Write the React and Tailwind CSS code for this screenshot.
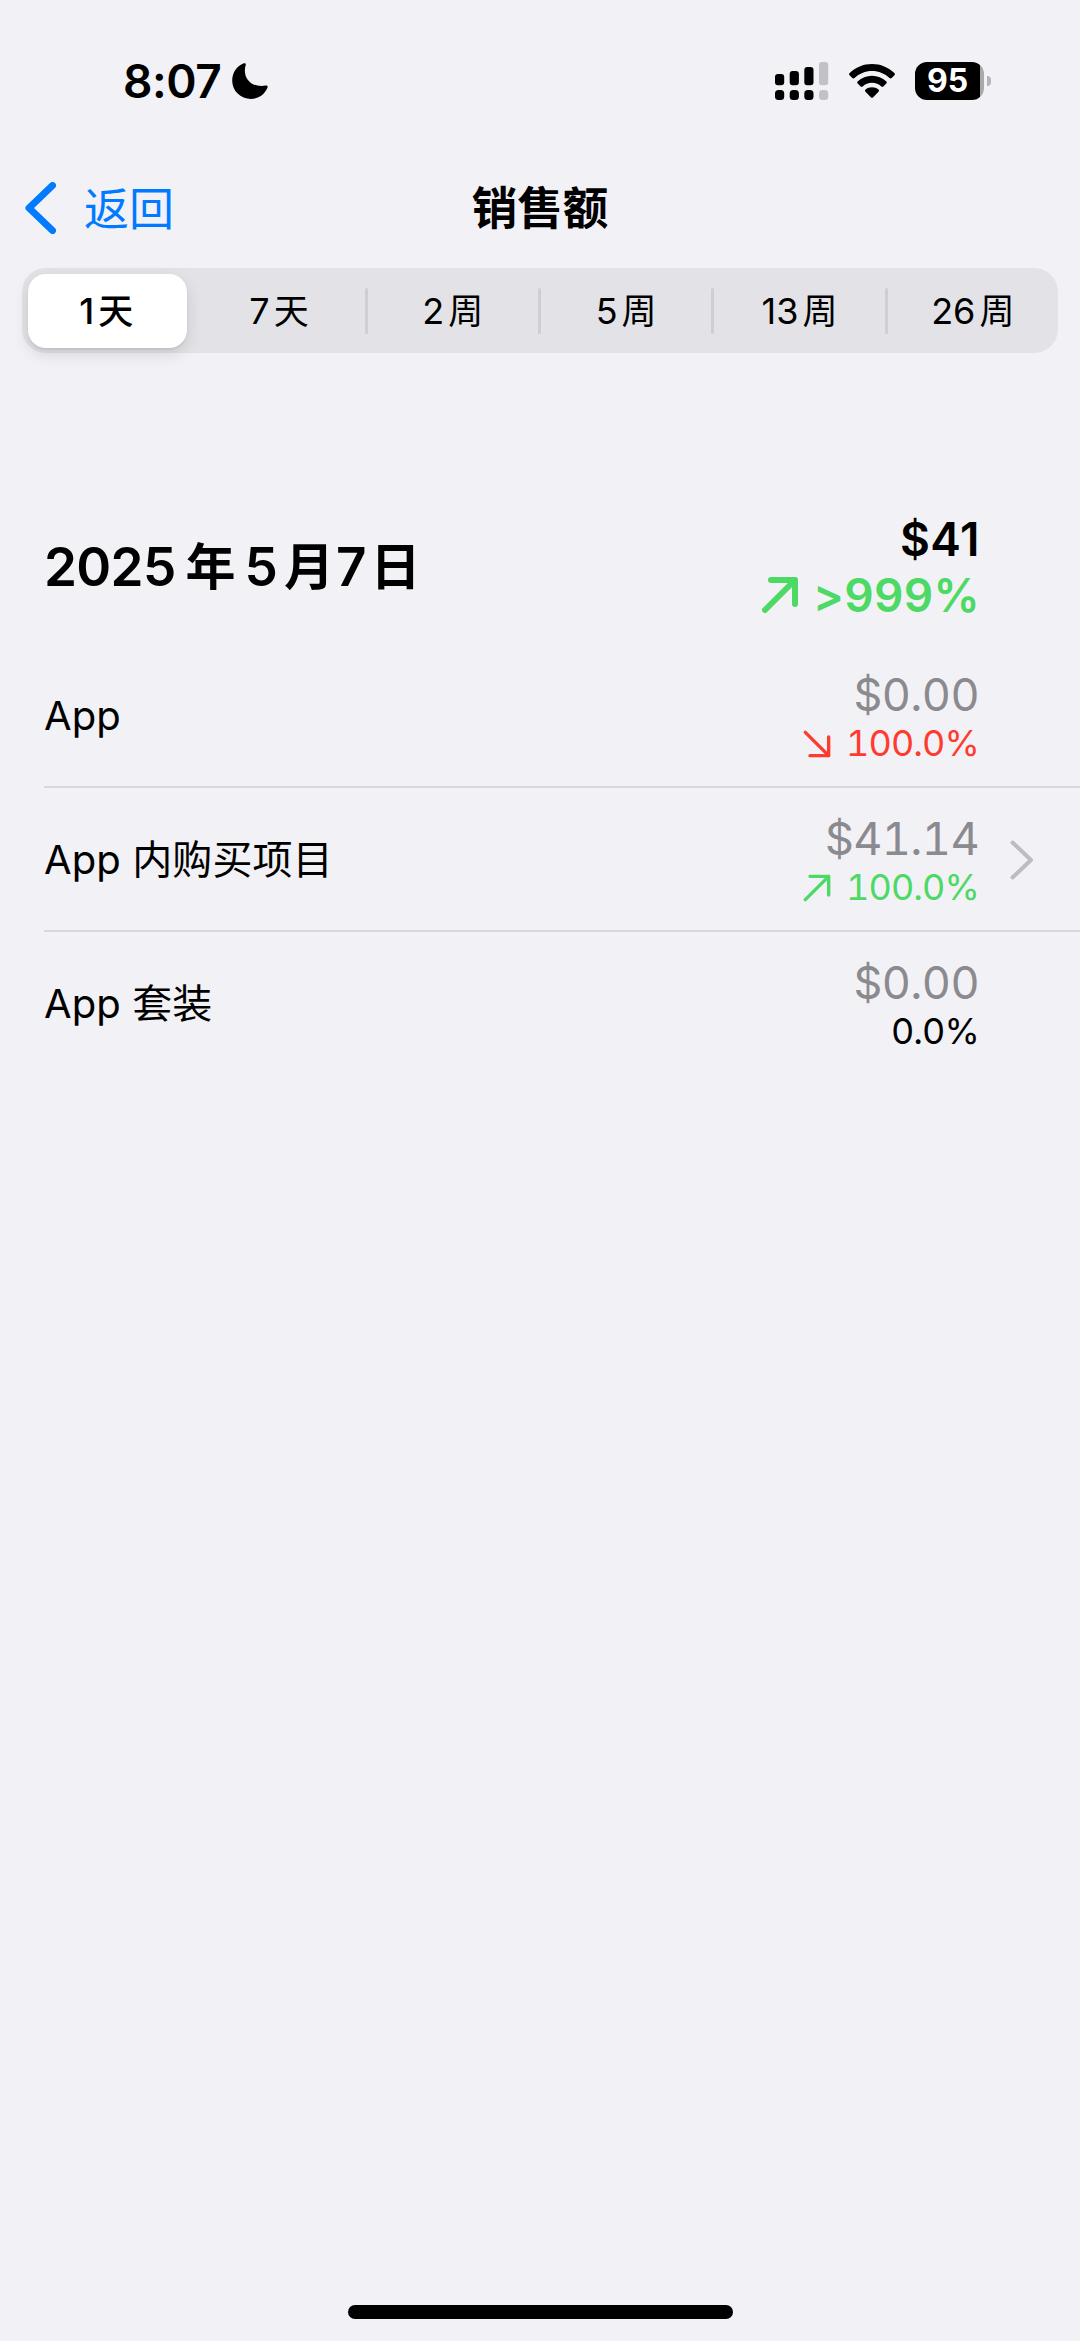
import React from 'react';

const ranges = [
  { id: '1d', count: '1', unit: '天' },
  { id: '7d', count: '7', unit: '天' },
  { id: '2w', count: '2', unit: '周' },
  { id: '5w', count: '5', unit: '周' },
  { id: '13w', count: '13', unit: '周' },
  { id: '26w', count: '26', unit: '周' },
];

const rows = [
  { id: 'app', name: 'App', amount: '$0.00', change: '100.0%', trend: 'down' },
  { id: 'iap', name: 'App 内购买项目', amount: '$41.14', change: '100.0%', trend: 'up', link: true },
  { id: 'bundle', name: 'App 套装', amount: '$0.00', change: '0.0%', trend: 'none' },
];

const trendColors = {
  up: 'text-[#4cd964]',
  down: 'text-[#ff3b30]',
  none: 'text-black',
};

function StatusBar() {
  return (
    <div className="flex h-[161px] items-center pl-[123px] pr-[89px]">
      <span className="pt-px text-[46px] font-semibold tracking-[-0.400px]">8:07</span>
      <svg className="ml-[11px] h-9 w-9" viewBox="0 0 36 36" fill="currentColor">
        <path d="M11.8 .3c1.3-.5 2.4.5 1.9 1.8C10 13.5 18.500 25.500 33.800 22.600c1.400-.3 2.200.8 1.700 2C32.700 31.500 26.500 36 19 36 8.500 36 .2 28 .2 17.600.2 9.800 4.800 3 11.800.3Z" />
      </svg>
      <div className="ml-auto flex items-center">
        <svg className="h-[38px] w-[54px]" viewBox="0 0 54 38" fill="currentColor">
          <rect x="0" y="12" width="9.200" height="11.300" rx="3" />
          <rect x="14.700" y="9" width="9.200" height="14.300" rx="3" />
          <rect x="29.300" y="5" width="9.200" height="18.300" rx="3" />
          <rect x="44" y="0" width="9.200" height="23.300" rx="3" fill="#c2c1c6" />
          <rect x="0" y="28" width="9.200" height="10" rx="3.500" />
          <rect x="14.700" y="28" width="9.200" height="10" rx="3.500" />
          <rect x="29.300" y="28" width="9.200" height="10" rx="3.500" />
          <rect x="44" y="28" width="9.200" height="10" rx="3.500" fill="#c2c1c6" />
        </svg>
        <svg className="ml-[20px] h-[34px] w-[46px]" viewBox="0 0 46 34" fill="currentColor">
          <path d="M23 0C14.300 0 6.500 3.400.7 9c-.8.7-.8 1.600-.1 2.300l2.700 2.700c.6.600 1.500.6 2.200 0C10.100 9.700 16.200 7 23 7s12.900 2.700 17.500 7c.7.6 1.600.6 2.200 0l2.700-2.700c.7-.7.7-1.600-.1-2.300C39.500 3.400 31.700 0 23 0Z" />
          <path d="M23 11.700c-5.500 0-10.400 2.100-14.200 5.600-.7.700-.7 1.500-.1 2.200l2.900 2.900c.6.6 1.400.6 2.100 0 2.500-2.200 5.700-3.600 9.300-3.600s6.800 1.400 9.300 3.600c.7.6 1.500.6 2.100 0l2.900-2.900c.6-.7.6-1.500-.1-2.200-3.800-3.500-8.700-5.600-14.200-5.600Z" />
          <path d="M23 23.200c-2.500 0-4.700.9-6.400 2.300-.8.600-.8 1.500-.1 2.200l5.300 5.500c.7.8 1.700.8 2.400 0l5.300-5.500c.7-.7.7-1.600-.1-2.200-1.700-1.400-3.900-2.300-6.400-2.300Z" />
        </svg>
        <div className="ml-[20px] flex h-[38px] w-[69px] items-center justify-center overflow-hidden rounded-[12px] bg-linear-to-r from-black from-[65px] to-[#a9a8ad] to-[65px] pr-1 pt-px">
          <span className="text-[32px] font-bold leading-none text-white">95</span>
        </div>
        <div className="ml-[3px] h-[10px] w-[4px] rounded-r-full bg-[#b5b4b9]" />
      </div>
    </div>
  );
}

function NavBar() {
  return (
    <div className="grid h-[95px] grid-cols-3 items-center">
      <button className="flex items-center pl-[25px] text-[#007aff]">
        <svg className="mb-[2px] h-[52px] w-[31px]" viewBox="0 0 31 52" fill="none" stroke="currentColor" strokeWidth="7" strokeLinecap="round" strokeLinejoin="round">
          <path d="M27.500 3.500 4 26l23.500 22.500" />
        </svg>
        <span className="ml-[28px] pt-[2px] text-[45px] leading-none">返回</span>
      </button>
      <h1 className="pt-px text-center text-[45.500px] font-semibold leading-none">销售额</h1>
    </div>
  );
}

function RangePicker() {
  return (
    <div className="mx-[22px] mt-3 h-[85px] rounded-[24px] bg-[#e3e2e7]">
      <div className="-mx-[2px] flex h-full items-center">
        {ranges.map((r, i) => (
          <div key={r.id} className="flex h-full flex-1 items-center">
            {i > 1 && <div className="-ml-[2px] h-[46px] w-[3px] rounded-full bg-[#cfced3]" />}
            <div
              className={
                i === 0
                  ? 'ml-[8px] mr-[6px] flex h-[74px] flex-1 items-center justify-center rounded-[18px] bg-white pr-[3px] font-medium shadow-[0_6px_16px_rgba(0,0,0,0.12),0_2px_2px_rgba(0,0,0,0.06)]'
                  : 'flex flex-1 items-center justify-center pr-[2px]'
              }
            >
              <span className="text-[36px] leading-none">{r.count}</span>
              <span className="ml-[4px] pt-px text-[35px] leading-none">{r.unit}</span>
            </div>
          </div>
        ))}
      </div>
    </div>
  );
}

function TrendArrow({ trend, className, strokeWidth }) {
  return (
    <svg className={className} viewBox="0 0 36 36" fill="none" stroke="currentColor" strokeWidth={strokeWidth} strokeLinecap="round" strokeLinejoin="round">
      {trend === 'up' ? <path d="M3 33 33 3M9 3h24v24" /> : <path d="M3 3l30 30M9 33h24V9" />}
    </svg>
  );
}

function Summary() {
  return (
    <div className="mt-[158px] flex h-[133px] items-start justify-between pl-[44px] pr-[100px] font-semibold">
      <h2 className="flex text-[53px] leading-[112px]">
        <span className="tracking-[-0.700px]">2025</span>
        <span className="ml-[10px] text-[50px]">年</span>
        <span className="ml-[9px]">5</span>
        <span className="ml-[6px] text-[50px]">月</span>
        <span className="ml-[2px]">7</span>
        <span className="ml-[4px] text-[50px]">日</span>
      </h2>
      <div className="flex flex-col items-end text-[46px] leading-[56px]">
        <span className="tracking-[0.500px]">$41</span>
        <span className="flex items-center tracking-[0.300px] text-[#4cd964]">
          <TrendArrow trend="up" className="mr-[15px] h-[36px] w-[36px]" strokeWidth="6" />
          &gt;999%
        </span>
      </div>
    </div>
  );
}

function SalesRow({ row, last }) {
  return (
    <div className={last ? 'ml-11 flex h-36' : 'ml-11 flex h-36 border-b-2 border-[#d8d7dc]'}>
      <span className="text-[40px] leading-[144px] tracking-[0.100px]">{row.name}</span>
      <div className="ml-auto flex flex-col items-end pt-[26px] leading-[49px] tabular-nums">
        <span className="text-[45px] tracking-[-0.600px] text-[#8a8a8f]">{row.amount}</span>
        <span className={`flex items-center text-[36px] tracking-[-0.900px] ${trendColors[row.trend]}`}>
          {row.trend !== 'none' && (
            <TrendArrow trend={row.trend} className="mr-[15px] h-[28px] w-[28px]" strokeWidth="4.300" />
          )}
          {row.change}
        </span>
      </div>
      <div className="flex w-[101px] items-center pl-[31px] pt-px text-[#bdbcc1]">
        {row.link && (
          <svg className="h-[40px] w-[24px]" viewBox="0 0 24 40" fill="none" stroke="currentColor" strokeWidth="4" strokeLinecap="round" strokeLinejoin="round">
            <path d="M2.500 2.500 21 20 2.500 37.500" />
          </svg>
        )}
      </div>
    </div>
  );
}

export default function App() {
  return (
    <div className="flex h-[2341px] w-[1080px] flex-col overflow-hidden whitespace-nowrap bg-[#f2f1f6] font-[Inter,'Noto_Sans_CJK_SC',sans-serif] text-black" lang="zh-CN">
      <StatusBar />
      <NavBar />
      <RangePicker />
      <Summary />
      <div>
        {rows.map((row, i) => (
          <SalesRow key={row.id} row={row} last={i === rows.length - 1} />
        ))}
      </div>
      <div className="mx-auto mb-[22px] mt-auto h-[14px] w-[385px] rounded-full bg-black" />
    </div>
  );
}
